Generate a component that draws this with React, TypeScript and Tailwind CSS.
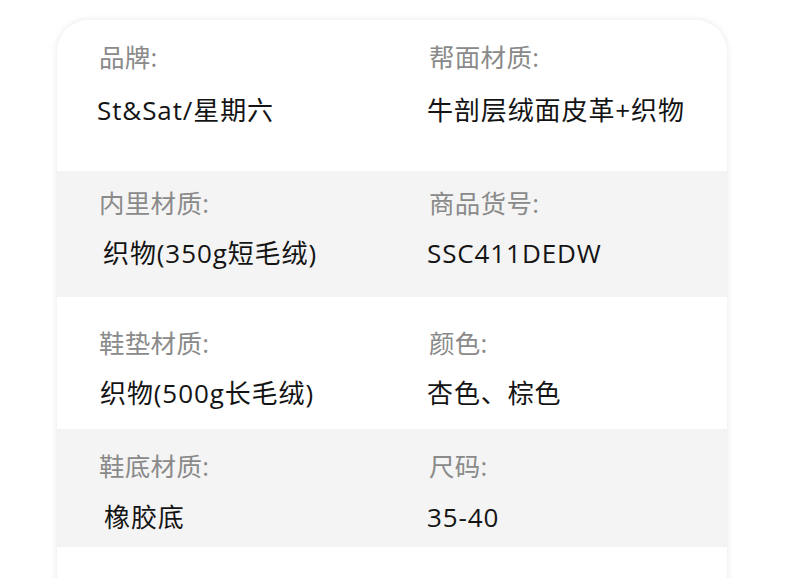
import React from "react";

type Cell = { label: string; value: string; vx?: number };
type Row = { h: number; pt: number; mt: number; gray: boolean; cells: [Cell, Cell] };

const rows: Row[] = [
  {
    h: 151, pt: 22, mt: 23, gray: false,
    cells: [
      { label: "品牌:", value: "St&Sat/星期六", vx: -2 },
      { label: "帮面材质:", value: "牛剖层绒面皮革+织物", vx: -2 },
    ],
  },
  {
    h: 126, pt: 17, mt: 20, gray: true,
    cells: [
      { label: "内里材质:", value: "织物(350g短毛绒)", vx: 4 },
      { label: "商品货号:", value: "SSC411DEDW", vx: -2 },
    ],
  },
  {
    h: 132, pt: 31, mt: 20, gray: false,
    cells: [
      { label: "鞋垫材质:", value: "织物(500g长毛绒)", vx: 1 },
      { label: "颜色:", value: "杏色、棕色", vx: -2 },
    ],
  },
  {
    h: 118, pt: 22, mt: 21, gray: true,
    cells: [
      { label: "鞋底材质:", value: "橡胶底", vx: 5 },
      { label: "尺码:", value: "35-40", vx: -2 },
    ],
  },
];

export default function App() {
  return (
    <div
      className="w-[790px] h-[578px] overflow-hidden bg-white pt-[20px]"
      style={{ fontFamily: '"Open Sans", "Noto Sans CJK SC", sans-serif' }}
    >
      <div className="ml-[57px] w-[670px] h-[600px] bg-white rounded-t-[32px] shadow-[0_0_7px_rgba(0,0,0,0.1)] overflow-hidden">
        {rows.map((r, i) => (
          <div
            key={i}
            className={`grid grid-cols-[372px_1fr] ${r.gray ? "bg-[#f4f4f4]" : "bg-white"}`}
            style={{ height: r.h, paddingTop: r.pt }}
          >
            {r.cells.map((c, j) => (
              <div key={j} className={j === 0 ? "pl-[42px]" : "pl-0"}>
                <div className="text-[25.5px] leading-[30px] text-[#8a8a8a] tracking-[0.3px]">{c.label}</div>
                <div
                  className="text-[26px] leading-[30px] text-[#141414] tracking-[0.9px] whitespace-nowrap"
                  style={{ marginTop: r.mt, marginLeft: c.vx ?? 0 }}
                >
                  {c.value}
                </div>
              </div>
            ))}
          </div>
        ))}
      </div>
    </div>
  );
}
